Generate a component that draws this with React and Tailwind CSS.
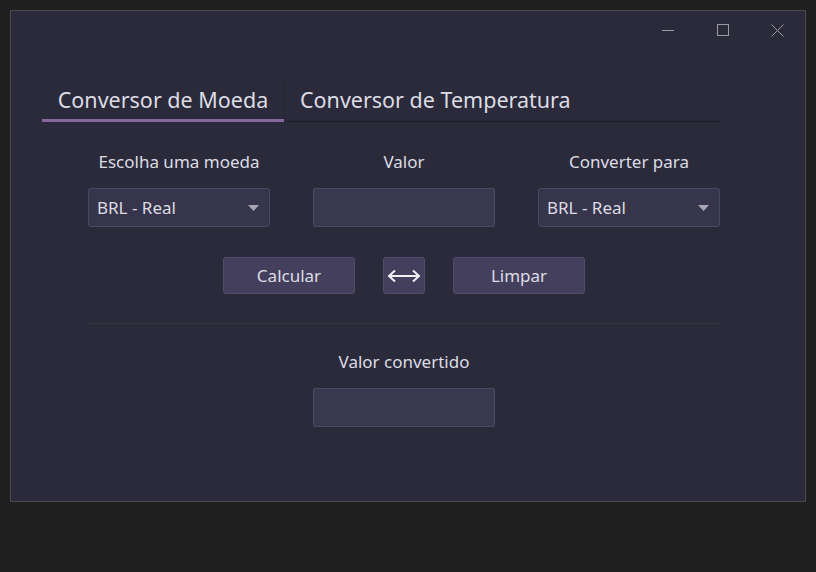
import React, { useState } from "react";

const font = { fontFamily: '"Noto Sans", "Open Sans", sans-serif' };

const Select = ({ value }) => (
  <div className="w-[182px] h-[39px] bg-[#37354b] border border-[#4a4862] rounded-[3px] flex items-center justify-between pl-[8px] pr-[10px]">
    <span className="text-[17px] text-[#dcdce4]">{value}</span>
    <svg width="11" height="6" viewBox="0 0 11 6">
      <path d="M0 0 L11 0 L5.5 6 Z" fill="#a8a6b4" />
    </svg>
  </div>
);

const Field = () => (
  <div className="w-[182px] h-[39px] bg-[#3a384f] border border-[#4b4962] rounded-[2px]" />
);

const Button = ({ children, className = "" }) => (
  <button className={`h-[37px] bg-[#453f5e] border border-[#524c6c] rounded-[3px] text-[17px] text-[#dcdce4] flex items-center justify-center ${className}`}>
    {children}
  </button>
);

export default function App() {
  const [tab, setTab] = useState(0);

  return (
    <div className="w-[816px] h-[572px] bg-[#1f1f1f] pt-[10px] pl-[10px]" style={font}>
      <div className="w-[796px] h-[492px] bg-[#2b2a3b] border border-[#4a4952] flex flex-col">
        {/* title bar */}
        <div className="h-[38px] flex justify-end">
          <div className="w-[55px] flex items-center justify-center">
            <div className="w-[12px] h-px bg-[#9a99a4]" />
          </div>
          <div className="w-[55px] flex items-center justify-center">
            <div className="w-[12px] h-[12px] border border-[#9a99a4]" />
          </div>
          <div className="w-[55px] flex items-center justify-center">
            <svg width="13" height="13" viewBox="0 0 13 13">
              <path d="M0.5 0.5 L12.5 12.5 M12.5 0.5 L0.5 12.5" stroke="#9a99a4" strokeWidth="1" />
            </svg>
          </div>
        </div>

        {/* tabs */}
        <div className="mt-[32px] ml-[31px] w-[678px] flex border-b border-[#1e1d29] h-[41px]">
          <button
            onClick={() => setTab(0)}
            className={`w-[242px] h-[41px] text-[21.5px] text-[#dcdce4] border-b-[3px] -mb-px ${tab === 0 ? "border-[#86689e]" : "border-transparent"}`}
          >
            Conversor de Moeda
          </button>
          <div className="w-px h-[38px] bg-[#24232f]" />
          <button
            onClick={() => setTab(1)}
            className={`px-[15px] h-[41px] text-[21.5px] text-[#dcdce4] border-b-[3px] -mb-px ${tab === 1 ? "border-[#86689e]" : "border-transparent"}`}
          >
            Conversor de Temperatura
          </button>
        </div>

        {/* form */}
        <div className="ml-[77px] w-[632px] mt-[28px] flex justify-between">
          {[
            ["Escolha uma moeda", <Select value="BRL - Real" />],
            ["Valor", <Field />],
            ["Converter para", <Select value="BRL - Real" />],
          ].map(([label, control], i) => (
            <div key={i} className="flex flex-col items-center">
              <span className="h-[24px] leading-[24px] text-[17px] text-[#dcdce4]">{label}</span>
              <div className="mt-[14px]">{control}</div>
            </div>
          ))}
        </div>

        <div className="mt-[30px] ml-[212px] flex gap-[28px]">
          <Button className="w-[132px]">Calcular</Button>
          <Button className="w-[42px]">
            <svg width="34" height="14" viewBox="0 0 34 14">
              <path d="M2 7 L32 7 M8 1.5 L2 7 L8 12.5 M26 1.5 L32 7 L26 12.5" stroke="#f0f0f4" strokeWidth="2" fill="none" />
            </svg>
          </Button>
          <Button className="w-[132px]">Limpar</Button>
        </div>

        <div className="ml-[77px] w-[632px] mt-[29px] h-px bg-[#34323f]" />

        <div className="mt-[26px] ml-[302px] w-[182px] flex flex-col items-center">
          <span className="h-[24px] leading-[24px] text-[17px] text-[#dcdce4] whitespace-nowrap">Valor convertido</span>
          <div className="mt-[14px]">
            <Field />
          </div>
        </div>
      </div>
    </div>
  );
}
